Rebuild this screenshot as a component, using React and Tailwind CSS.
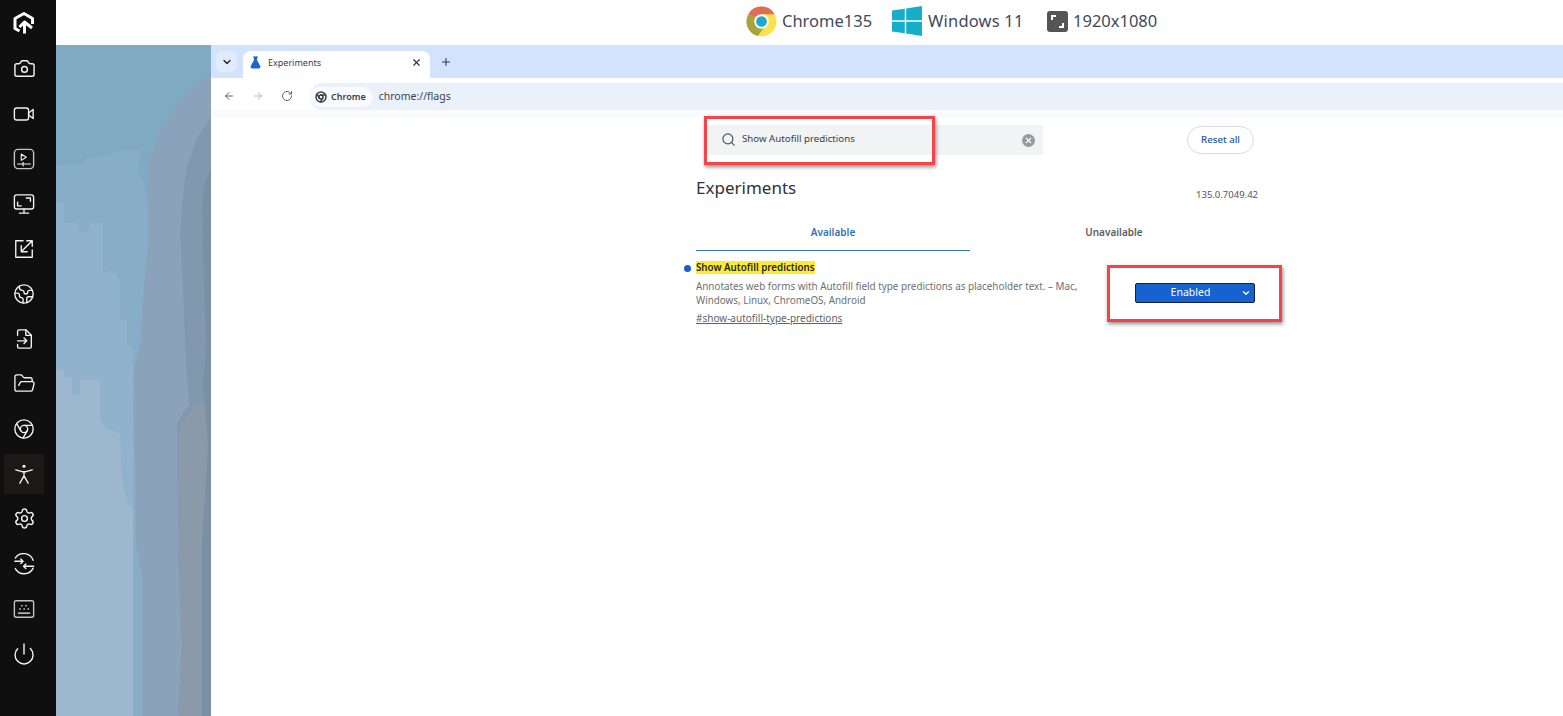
import { Camera, Earth, FolderOpen, Chrome, Settings, Power, ChevronDown, X, Plus, ArrowLeft, ArrowRight, RotateCw, Search, FlaskConical } from 'lucide-react'

const FONT = "font-['Noto_Sans','Open_Sans',sans-serif]"

/* ── sidebar icons that lucide doesn't have ── */
function Svg({ children, size = 22 }) {
  return (
    <svg width={size} height={size} viewBox="0 0 24 24" fill="none" stroke="currentColor" strokeWidth="1.5" strokeLinecap="round" strokeLinejoin="round">
      {children}
    </svg>
  )
}

const Logo = () => (
  <svg width="24" height="24" viewBox="0 0 24 24" fill="none" stroke="#fff" strokeWidth="3" strokeLinejoin="round">
    <path d="M7.500 20 L3 17.500 V7.500 L12 2.500 L20.500 7.500 V13" />
    <path d="M12.500 22.500 V12 M7.500 16 L12.500 11 L20 17" />
  </svg>
)
const VideoIcon = () => (
  <Svg>
    <rect x="1.500" y="5.500" width="15.500" height="13" rx="2.500" />
    <path d="M17 11 L22 7 V17 L17 13 Z" />
  </Svg>
)
const ClipIcon = () => (
  <Svg>
    <rect x="1.500" y="1.500" width="21" height="21" rx="4" stroke="#c4c4c4" />
    <path d="M9 6.500 L14.500 10 L9 13.500 Z" strokeWidth="1.200" />
    <path d="M5 17.500 H19 M11 15.500 V19.500" strokeWidth="1.200" />
  </Svg>
)
const ScreenIcon = () => (
  <Svg>
    <rect x="1.500" y="2" width="21" height="15.500" rx="2.500" />
    <path d="M14.500 5.500 H19 V9 M5 10 V14 H9" />
    <path d="M12 17.500 V21 M7 22 H17" />
  </Svg>
)
const ResizeIcon = () => (
  <Svg>
    <path d="M11 3 H3 V21 H21 V13" />
    <path d="M21 3 L9.500 14.500 M9 8.500 V15 H15.500 M15 3 H21 V9" />
  </Svg>
)
const FileArrowIcon = () => (
  <Svg>
    <path d="M5 8 V3.500 A1.500 1.500 0 0 1 6.500 2 H14 L20 8 V20.500 A1.500 1.500 0 0 1 18.500 22 H6.500 A1.500 1.500 0 0 1 5 20.500 V18" />
    <path d="M14 2 V8 H20" />
    <path d="M5 14 H15 M12 11 L15 14 L12 17" />
  </Svg>
)
const PersonIcon = () => (
  <Svg>
    <circle cx="12" cy="3.500" r="1.700" fill="currentColor" stroke="none" />
    <path d="M3 7.500 L10 9.500 H14 L21 7.500 M12 9.500 V14 M12 14 L7.500 22 M12 14 L16.500 22" />
  </Svg>
)
const SyncIcon = () => (
  <Svg>
    <path d="M2.500 5.500 A11 11 0 0 1 22 8" />
    <path d="M22 16.500 A11 11 0 0 1 2.500 17" />
    <path d="M2 9 H11 M8.500 6.500 L11 9 L8.500 11.500" />
    <path d="M22.500 14.500 H11.500 M14 12 L11.500 14.500 L14 17" />
  </Svg>
)
const KeyboardIcon = () => (
  <Svg>
    <rect x="1.500" y="3" width="21" height="18" rx="2" stroke="#c4c4c4" />
    <path d="M9.500 8.500 H9.800 M14 8.500 H14.300 M7.500 12 H7.800 M12 12 H12.300 M16.500 12 H16.800 M6 16.500 H18" />
  </Svg>
)

const NAV = [
  { icon: <Camera size={23} strokeWidth={1.5} /> },
  { icon: <VideoIcon /> },
  { icon: <ClipIcon /> },
  { icon: <ScreenIcon /> },
  { icon: <ResizeIcon /> },
  { icon: <Earth size={22} strokeWidth={1.5} /> },
  { icon: <FileArrowIcon /> },
  { icon: <FolderOpen size={23} strokeWidth={1.4} /> },
  { icon: <Chrome size={22} strokeWidth={1.5} /> },
  { icon: <PersonIcon />, active: true },
  { icon: <Settings size={23} strokeWidth={1.5} /> },
  { icon: <SyncIcon /> },
  { icon: <KeyboardIcon /> },
  { icon: <Power size={24} strokeWidth={1.4} /> },
]

function Sidebar() {
  return (
    <aside className="w-14 shrink-0 bg-[#0f0f0f] text-[#f2f2f2] flex flex-col pl-1">
      <div className="w-10 h-[46px] flex items-center justify-center"><Logo /></div>
      {NAV.map((n, i) => (
        <div key={i} className="w-10 h-[45px] flex items-center justify-center">
          <div className={`w-10 h-10 flex items-center justify-center ${n.active ? 'bg-[#1a1916]' : ''}`}>
            {n.icon}
          </div>
        </div>
      ))}
    </aside>
  )
}

/* ── top info bar ── */
const ChromeLogo = () => (
  <svg width="31" height="31" viewBox="0 0 32 32">
    <circle cx="16" cy="16" r="15.500" fill="#fbe04f" />
    <path d="M16 16 L2.600 8.200 A15.500 15.500 0 0 1 29.500 8.500 L16 8.500 Z" fill="#dd6d56" />
    <path d="M16 16 L2.600 8.200 A15.500 15.500 0 0 0 12 31 L19 22 Z" fill="#a8a33c" />
    <circle cx="16" cy="16" r="7.500" fill="#fff" />
    <circle cx="16" cy="16" r="5.500" fill="#1aaccf" />
  </svg>
)
const WindowsLogo = () => (
  <svg width="30" height="30" viewBox="0 0 30 30" fill="#15aec9">
    <path d="M0 4.500 L12.800 2.700 V14.200 H0 Z" />
    <path d="M14.200 2.500 L30 0 V14.200 H14.200 Z" />
    <path d="M0 15.800 H12.800 V27.300 L0 25.500 Z" />
    <path d="M14.200 15.800 H30 V30 L14.200 27.500 Z" />
  </svg>
)
const ResolutionIcon = () => (
  <svg width="21" height="21" viewBox="0 0 21 21">
    <rect width="21" height="21" rx="3" fill="#555" />
    <path d="M5 9 V5 H9 M16 12 V16 H12" fill="none" stroke="#fff" strokeWidth="2" />
  </svg>
)

function TopBar() {
  return (
    <header className="h-[45px] shrink-0 bg-white flex items-center pb-[3px] pl-[690px] text-[16.500px] text-[#3f4a5c]">
      <ChromeLogo />
      <span className="ml-[5px] w-[110px]">Chrome135</span>
      <WindowsLogo />
      <span className="ml-[6px] w-[119px] tracking-[0.2px]">Windows 11</span>
      <ResolutionIcon />
      <span className="ml-[5px]">1920x1080</span>
    </header>
  )
}

/* ── blurry wallpaper strip, stepped edges come from the compressed recording ── */
function Wallpaper() {
  return (
    <svg className="w-[155px] shrink-0 h-full" viewBox="0 0 155 671" preserveAspectRatio="none">
      <rect width="155" height="671" fill="#80a9c4" />
      <polygon fill="#88adc8" points="0,121 12,119 27,118 30,113 48,112 60,106 71,105 84,105 82,130 88,135 92,165 92,671 0,671" />
      <polygon fill="#91b2cd" points="0,158 8,158 8,178 22,178 23,187 32,187 34,178 47,178 47,228 57,225 64,235 64,275 71,275 71,298 77,305 77,671 0,671" />
      <polygon fill="#9db7ce" points="0,325 8,325 8,332 16,332 16,350 24,350 24,335 44,335 44,375 52,385 64,388 66,435 72,460 77,462 77,671 0,671" />
      <polygon fill="#8aa3ba" points="155,28 140,40 120,62 104,88 92,118 92,160 93,190 88,240 84,300 77,328 79,420 80,500 86,530 86,671 155,671" />
      <polygon fill="#8199ae" points="155,72 140,95 130,125 126,162 124,190 127,240 129,300 133,360 121,378 122,500 126,600 122,671 155,671" />
      <polygon fill="#8a9aaa" points="121,385 140,360 155,360 155,671 122,671 126,600 122,500" />
      <polygon fill="#7b91a3" points="155,122 148,140 146,165 148,240 150,300 147,340 152,400 146,500 146,671 155,671" />
    </svg>
  )
}

/* ── chrome window ── */
function TabStrip() {
  return (
    <div className="h-[33px] shrink-0 bg-[#d3e3fd] flex items-end pl-[5px]">
      <div className="self-start mt-[6px] w-[21px] h-[21px] rounded-md bg-[#e2ebfb] flex items-center justify-center">
        <ChevronDown size={12} strokeWidth={2.500} className="text-[#1f1f1f]" />
      </div>
      <div className="ml-[6px] w-[187px] h-[27px] bg-white rounded-t-lg flex items-center pb-[4px] pl-[6px] pr-[8px] text-[9px] text-[#3c4043]">
        <FlaskConical size={13} fill="#1a66cc" stroke="#1a66cc" />
        <span className="ml-[6px] flex-1">Experiments</span>
        <X size={11} strokeWidth={2.500} className="text-[#333]" />
      </div>
      <Plus size={12} strokeWidth={2} className="self-start mt-[11px] ml-[10px] text-[#333]" />
    </div>
  )
}

function Toolbar() {
  return (
    <div className="h-[32px] shrink-0 bg-white flex items-center pt-[4px] pl-[12px] text-[#5f6368]">
      <ArrowLeft size={12} strokeWidth={2} />
      <ArrowRight size={12} strokeWidth={2} className="ml-[17px] text-[#b5b8bc]" />
      <RotateCw size={12} strokeWidth={2} className="ml-[17px]" />
      <div className="ml-[16px] flex-1 self-stretch mt-[1px] rounded-l-full bg-[#eaf1fb] flex items-center">
        <div className="h-[20px] pl-[6px] pr-[7px] rounded-full bg-[#f8fafd] flex items-center text-[9px] font-semibold text-[#3c4043]">
          <Chrome size={12} strokeWidth={3} />
          <span className="ml-[4px]">Chrome</span>
        </div>
        <span className="ml-[6px] text-[10.500px] text-[#3f4449]">chrome://flags</span>
      </div>
    </div>
  )
}

function FlagsPage() {
  return (
    <div className="relative flex-1 bg-white pl-[485px] pr-[305px] text-[#50565c]">
      <div className="h-[8px] -ml-[485px] -mr-[305px] bg-[#f8fafc]" />
      {/* search row */}
      <div className="mt-[7px] flex items-center justify-between">
        <div className="ml-[10px] w-[337px] h-[30px] bg-[#f1f3f4] flex items-center pl-[15px] pr-[8px] text-[9.700px] text-[#3c4043]">
          <Search size={15} strokeWidth={2} className="text-[#555] -mt-[1px]" />
          <span className="ml-[6px] flex-1 -mt-[2px]">Show Autofill predictions</span>
          <div className="w-[13px] h-[13px] rounded-full bg-[#9a9a9a] flex items-center justify-center">
            <X size={9} strokeWidth={3} className="text-white" />
          </div>
        </div>
        <div className="mr-[4px] h-[28px] w-[67px] rounded-full border border-[#d4dce8] flex items-center justify-center text-[9.700px] font-medium text-[#1a56a8]">
          Reset all
        </div>
      </div>
      {/* heading */}
      <div className="mt-[19px] flex items-end justify-between h-[27px]">
        <h1 className="text-[17px] leading-[27px] text-[#2f3236]">Experiments</h1>
        <span className="text-[9.500px] leading-[14px] mb-[-1px]">135.0.7049.42</span>
      </div>
      {/* tabs */}
      <div className="mt-[15px] flex h-[35px] pt-[7px] text-[10px] font-semibold">
        <div className="w-[274px] text-center text-[#3470b8] border-b-[1.500px] border-[#3b78c4] leading-[19px]">Available</div>
        <div className="flex-1 text-center text-[#5a5e63] leading-[19px]">Unavailable</div>
      </div>
      {/* flag row */}
      <div className="relative mt-[10px] flex justify-between">
        <div className="w-[390px]">
          <span className="absolute -left-[12px] top-[4px] w-[7px] h-[7px] rounded-full bg-[#1a5fd0]" />
          <div className="text-[9.750px] leading-[14px] font-semibold text-[#23262a]">
            <span className="bg-[#ffeb2e]">Show Autofill predictions</span>
          </div>
          <p className="mt-[4px] text-[9.850px] leading-[14px] text-[#6b7075]">
            Annotates web forms with Autofill field type predictions as placeholder text. – Mac, Windows, Linux, ChromeOS, Android
          </p>
          <a className="block mt-[4px] text-[10px] leading-[14px] underline text-[#5f6368]">#show-autofill-type-predictions</a>
        </div>
        <div className="mt-[22px] mr-[3px] w-[120px] h-[20px] rounded-[2px] bg-[#1562d0] border border-[#14223c] flex items-center text-white text-[10.500px]">
          <span className="flex-1 text-center pl-[4px]">Enabled</span>
          <ChevronDown size={10} strokeWidth={3} className="mr-[3px]" />
        </div>
      </div>

      {/* red callouts laid over the page */}
      <div className="absolute left-[493px] top-[6px] w-[231px] h-[49px] border-[3px] border-[#f4444a] shadow-[1px_2px_4px_rgba(0,0,0,0.45)]" />
      <div className="absolute left-[896px] top-[155px] w-[175px] h-[57px] border-[3px] border-[#f4444a] shadow-[1px_2px_4px_rgba(0,0,0,0.45)]" />
    </div>
  )
}

export default function App() {
  return (
    <div className={`h-[716px] w-[1563px] flex overflow-hidden bg-white ${FONT}`}>
      <Sidebar />
      <div className="flex-1 flex flex-col min-w-0">
        <TopBar />
        <div className="flex-1 flex min-h-0">
          <Wallpaper />
          <div className="flex-1 flex flex-col min-w-0">
            <TabStrip />
            <Toolbar />
            <FlagsPage />
          </div>
        </div>
      </div>
    </div>
  )
}
